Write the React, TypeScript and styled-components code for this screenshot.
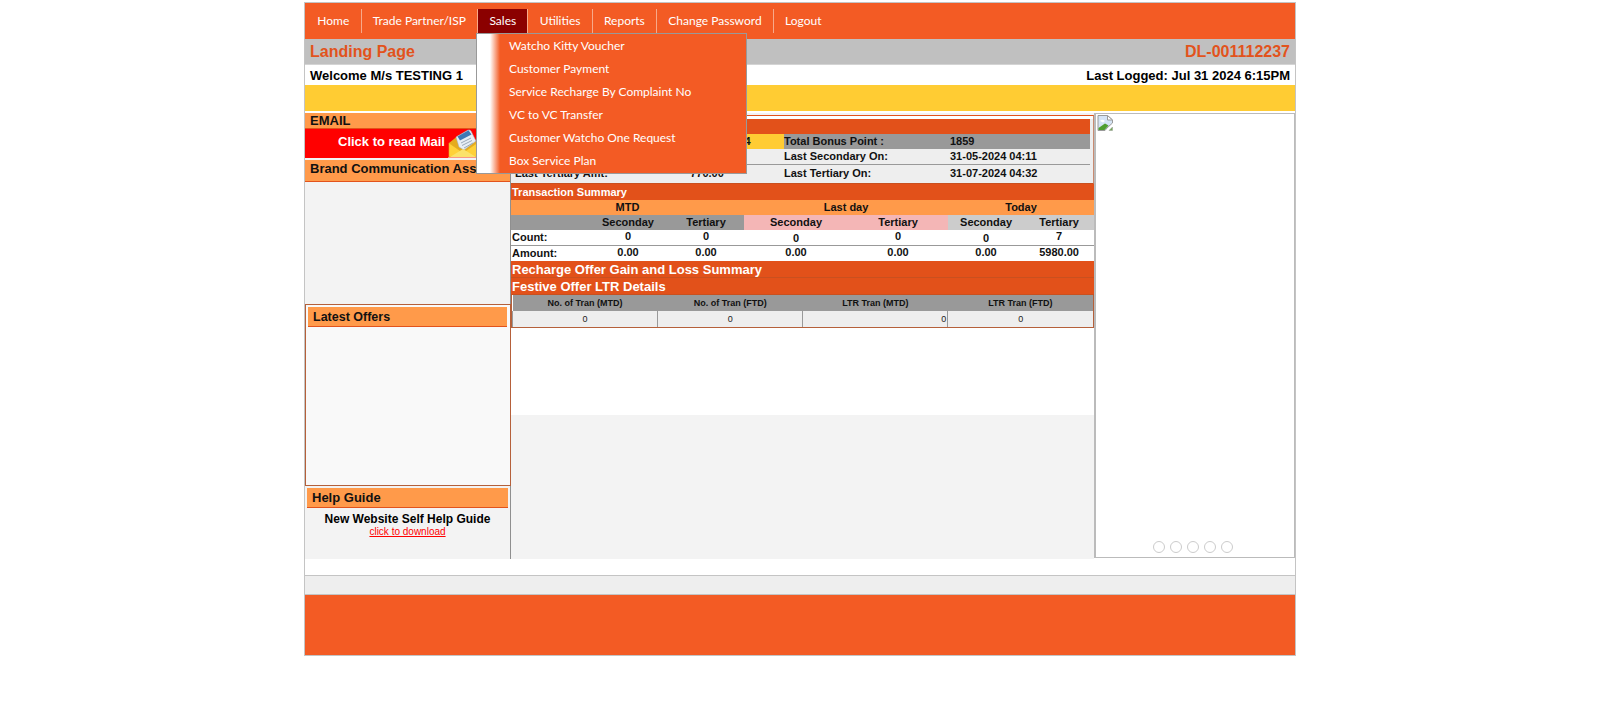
import React from 'react';
import styled, { createGlobalStyle } from 'styled-components';

const GlobalStyle = createGlobalStyle`
    html, body {
        margin: 0;
        padding: 0;
        background: #fff;
        font-family: "Liberation Sans", Arial, sans-serif;
    }
`;

const Page = styled.div`
    width: 990px;
    margin: 2px 0 0 304px;
    border: 1px solid #c4c4c4;
    position: relative;
`;

const NavBar = styled.nav`
    height: 36px;
    background: #f35b24;
    display: flex;
    align-items: center;
    padding: 0 0 0 1px;
`;

const NavItem = styled.div<{ $active?: boolean; $last?: boolean }>`
    box-sizing: border-box;
    height: 24px;
    padding: 0 11.25px 1px;
    display: flex;
    align-items: center;
    font-family: Lato, Roboto, sans-serif;
    font-size: 12px;
    color: #fff;
    background: ${(p) => (p.$active ? '#8b0000' : 'transparent')};
    border-right: 1px solid ${(p) => (p.$last ? 'transparent' : '#f7a98a')};
`;

const DropMenu = styled.div`
    position: absolute;
    left: 171px;
    top: 30px;
    width: 269px;
    height: 139px;
    border: 1px solid #999;
    background: linear-gradient(to right, #fff 0, #fff 13px, #f35b24 23px);
    z-index: 5;
`;

const DropItem = styled.div`
    height: 23px;
    line-height: 23px;
    padding-left: 32px;
    font-family: Lato, Roboto, sans-serif;
    font-size: 12px;
    color: #fff;
`;

const TitleBar = styled.div`
    height: 25px;
    background: #c0c0c0;
    border-bottom: 1px solid #d4d4d4;
    display: flex;
    justify-content: space-between;
    align-items: center;
    padding: 0 5px;
    font-size: 16px;
    font-weight: bold;
    color: #e2531c;
`;

const InfoRow = styled.div`
    height: 20px;
    display: flex;
    justify-content: space-between;
    align-items: center;
    padding: 0 5px;
    font-size: 13px;
    font-weight: bold;
    color: #000;
`;

const YellowBar = styled.div`
    height: 26px;
    background: #ffcc33;
`;

const Columns = styled.div`
    display: grid;
    grid-template-columns: 206px 583px 201px;
    margin-top: 2px;
    height: 446px;
`;

const LeftCol = styled.aside`
    background: #f3f3f3;
    border-right: 1px solid #8f8f8f;
    display: flex;
    flex-direction: column;
`;

const SectionHead = styled.div`
    height: 15px;
    line-height: 15px;
    padding-left: 5px;
    background: #ff9a4a;
    border-bottom: 1px solid #e2531c;
    font-size: 13px;
    font-weight: bold;
    color: #111;
    overflow: hidden;
    white-space: nowrap;
`;

const BrandHead = styled(SectionHead)`
    height: 21px;
    line-height: 17px;
`;

const MailLink = styled.div`
    height: 29px;
    margin-bottom: 2px;
    background: #ff0000;
    display: flex;
    align-items: center;
    padding-left: 33px;
    gap: 3px;
    color: #fff;
    font-size: 13px;
    font-weight: bold;
`;

const MailText = styled.span`
    margin-top: -4px;
`;

const BrandBody = styled.div`
    height: 122px;
`;

const OffersBox = styled.div`
    height: 178px;
    margin-right: -1px;
    border: 1px solid #b5603a;
    background: #f9f9f9;
    padding: 2px 3px 0 2px;
`;

const BoxHead = styled.div`
    height: 19px;
    line-height: 20px;
    padding-left: 5px;
    background: #ff9a4a;
    border-bottom: 1px solid #e2531c;
    font-size: 12.5px;
    font-weight: bold;
    color: #111;
`;

const HelpBox = styled.div`
    padding: 2px 2px 0;
    text-align: center;
`;

const HelpHead = styled(BoxHead)`
    text-align: left;
    font-size: 13px;
`;

const HelpTitle = styled.div`
    margin-top: 3px;
    font-size: 12px;
    line-height: 16px;
    font-weight: bold;
    color: #000;
`;

const HelpLink = styled.a`
    display: block;
    font-size: 10px;
    line-height: 10px;
    color: #ff0000;
    text-decoration: underline;
`;

const CenterCol = styled.main`
    background: #f3f3f3;
`;

const CenterTop = styled.div`
    background: #fff;
    height: 300px;
`;

const SummaryPanel = styled.div`
    background: linear-gradient(#fff 3px, #eee 3px);
    border-top: 1px solid #e2531c;
    border-right: 1px solid #c98a70;
    border-bottom: 1px solid #c9501f;
    margin-top: 2px;
    padding: 3px 3px 0 1px;
    height: 69px;
    box-sizing: border-box;
`;

const Grid = styled.table`
    border-collapse: collapse;
    table-layout: fixed;
    width: 100%;
    font-size: 11px;
    font-weight: bold;
    color: #111;
`;

const HeadBand = styled.tr`
    background: #e2511a;
    height: 15px;
`;

const Row = styled.tr<{ $line?: boolean; $tall?: boolean }>`
    height: ${(p) => (p.$tall ? '18px' : '15px')};
    border-bottom: ${(p) => (p.$line ? '1px solid #999' : 'none')};
`;

const Cell = styled.td<{ $bg?: string; $center?: boolean; $inset?: boolean }>`
    padding: 0 0 0 ${(p) => (p.$inset ? '3px' : '0')};
    line-height: 13px;
    white-space: nowrap;
    background: ${(p) => p.$bg || 'transparent'};
    text-align: ${(p) => (p.$center ? 'center' : 'left')};
`;

const Band = styled.div<{ $big?: boolean }>`
    background: #e2511a;
    color: #fff;
    font-weight: bold;
    height: ${(p) => (p.$big ? '16px' : '15px')};
    line-height: ${(p) => (p.$big ? '17px' : '16px')};
    font-size: ${(p) => (p.$big ? '13px' : '11px')};
    border-bottom: 1px solid ${(p) => (p.$big ? '#c9501f' : '#e2511a')};
    padding-left: 1px;
`;

const TxTable = styled(Grid)`
    text-align: center;
    background: #fff;

    tr + tr td:nth-child(3) {
        padding-right: 5px;
    }
`;

const TxRow = styled.tr<{ $line?: boolean }>`
    height: 15px;
    border-bottom: ${(p) => (p.$line ? '1px solid #999' : 'none')};
`;

const TxHead = styled.td<{ $bg: string }>`
    padding: 0;
    height: 15px;
    line-height: 15px;
    background: ${(p) => p.$bg};
    text-align: center;
`;

const TxCell = styled.td<{ $label?: boolean; $low?: boolean }>`
    padding: ${(p) => (p.$low ? '2px' : p.$label ? '1px' : '0')} 0 0 ${(p) => (p.$label ? '1px' : '0')};
    line-height: 13px;
    text-align: ${(p) => (p.$label ? 'left' : 'center')};
    vertical-align: top;
`;

const LtrWrap = styled.div`
    border: 1px solid #b5603a;
    border-top: none;
`;

const LtrTable = styled.table`
    border-collapse: collapse;
    table-layout: fixed;
    width: 100%;
    font-size: 9px;
    color: #222;
`;

const LtrHead = styled.th`
    height: 16px;
    padding: 0;
    background: #999;
    font-weight: bold;
    color: #111;
    text-align: center;
`;

const LtrCell = styled.td<{ $right?: boolean }>`
    height: 16px;
    padding: 0 ${(p) => (p.$right ? '1px' : '0')} 0 0;
    background: #eee;
    border-left: 1px solid #999;
    text-align: ${(p) => (p.$right ? 'right' : 'center')};
`;

const RightCol = styled.div`
    box-sizing: border-box;
    border: 1px solid #bbb;
    border-left-width: 2px;
    height: 445px;
    background: #fff;
    display: flex;
    flex-direction: column;
    justify-content: space-between;
    padding: 1px 0 4px 1px;
`;

const Dots = styled.div`
    display: flex;
    justify-content: center;
    gap: 5px;
    padding-right: 6px;
`;

const Dot = styled.span`
    box-sizing: border-box;
    width: 12px;
    height: 12px;
    border: 1px solid #ccc;
    border-radius: 50%;
    background: #fff;
`;

const Spacer = styled.div`
    height: 16px;
`;

const GreyStrip = styled.div`
    height: 18px;
    background: #eee;
    border-top: 1px solid #c4c4c4;
    border-bottom: 1px solid #c4c4c4;
`;

const Footer = styled.footer`
    height: 60px;
    background: #f35b24;
`;

const MailIcon = () => (
    <svg width="30" height="29" viewBox="0 0 30 29">
        <path d="M1 14 L11 6 H22 L29 14 V28 H1 Z" fill="#e5ab1e" />
        <path d="M8 8 L20 1 Q22 0.5 23 2 L28 12 L16 21 L11 18 Z" fill="#e8eef4" stroke="#9fb0c2" strokeWidth="0.5" />
        <path d="M9.5 7.5 L20.5 1.2 L23.5 5.5 L12 11.5 Z" fill="#3f79b5" />
        <path d="M13 14 L23 9 M14 16.5 L24 11.5 M16 19 L25 14" stroke="#9aa9b8" strokeWidth="1" />
        <path d="M1 14 L14 23 H16 L29 14 V28 H1 Z" fill="#ffd138" stroke="#e0ab22" strokeWidth="0.6" />
        <path d="M2 28 L15 20 L28 28 Z" fill="#fbe26a" />
        <path d="M0 29 H30" stroke="#fff" strokeWidth="1" />
    </svg>
);

const BrokenImage = () => (
    <svg width="16" height="16" viewBox="0 0 16 16">
        <path d="M1 0.5 H10.5 L15.5 5 V8 L10 13 L8 15.5 H1 Z" fill="#d5e4f5" stroke="#9a9a9a" strokeWidth="1" />
        <path d="M10.5 0.5 V5 H15.5 Z" fill="#fff" stroke="#9a9a9a" strokeWidth="1" />
        <path d="M3 6 Q5 3.5 8 6 L6 7.5 Z" fill="#fff" />
        <path d="M1.5 15 V13 L8 8.5 L11.5 10.5 L7.5 15 Z" fill="#4f9e2f" />
        <path d="M12 15.5 L15.5 12 V15.5 Z" fill="#6da84f" stroke="#9a9a9a" strokeWidth="0.5" />
    </svg>
);

const navItems = ['Home', 'Trade Partner/ISP', 'Sales', 'Utilities', 'Reports', 'Change Password', 'Logout'];
const salesItems = [
    'Watcho Kitty Voucher',
    'Customer Payment',
    'Service Recharge By Complaint No',
    'VC to VC Transfer',
    'Customer Watcho One Request',
    'Box Service Plan',
];

export default function App() {
    return (
        <>
            <GlobalStyle />
            <Page>
                <NavBar>
                    {navItems.map((item, i) => (
                        <NavItem key={item} $active={item === 'Sales'} $last={i === navItems.length - 1}>
                            {item}
                        </NavItem>
                    ))}
                </NavBar>
                <DropMenu>
                    {salesItems.map((item) => (
                        <DropItem key={item}>{item}</DropItem>
                    ))}
                </DropMenu>
                <TitleBar>
                    <span>Landing Page</span>
                    <span>DL-001112237</span>
                </TitleBar>
                <InfoRow>
                    <span>Welcome M/s TESTING 1</span>
                    <span>Last Logged: Jul 31 2024 6:15PM</span>
                </InfoRow>
                <YellowBar />
                <Columns>
                    <LeftCol>
                        <SectionHead>EMAIL</SectionHead>
                        <MailLink>
                            <MailText>Click to read Mail</MailText>
                            <MailIcon />
                        </MailLink>
                        <BrandHead>Brand Communication Assets</BrandHead>
                        <BrandBody />
                        <OffersBox>
                            <BoxHead>Latest Offers</BoxHead>
                        </OffersBox>
                        <HelpBox>
                            <HelpHead>Help Guide</HelpHead>
                            <HelpTitle>New Website Self Help Guide</HelpTitle>
                            <HelpLink>click to download</HelpLink>
                        </HelpBox>
                    </LeftCol>
                    <CenterCol>
                        <CenterTop>
                            <SummaryPanel>
                                <Grid>
                                    <colgroup>
                                        <col width="118" />
                                        <col width="154" />
                                        <col width="166" />
                                        <col width="140" />
                                    </colgroup>
                                    <tbody>
                                        <HeadBand>
                                            <Cell colSpan={4} />
                                        </HeadBand>
                                        <Row>
                                            <Cell />
                                            <Cell $bg="#ffcc33" $center>31-07-2024 04:34</Cell>
                                            <Cell $bg="#999">Total Bonus Point :</Cell>
                                            <Cell $bg="#999">1859</Cell>
                                        </Row>
                                        <Row $line>
                                            <Cell />
                                            <Cell />
                                            <Cell>Last Secondary On:</Cell>
                                            <Cell>31-05-2024 04:11</Cell>
                                        </Row>
                                        <Row $tall>
                                            <Cell $inset>Last Tertiary Amt:</Cell>
                                            <Cell $center>770.00</Cell>
                                            <Cell>Last Tertiary On:</Cell>
                                            <Cell>31-07-2024 04:32</Cell>
                                        </Row>
                                    </tbody>
                                </Grid>
                            </SummaryPanel>
                            <Band>Transaction Summary</Band>
                            <TxTable>
                                <colgroup>
                                    <col width="72" />
                                    <col width="90" />
                                    <col width="71" />
                                    <col width="104" />
                                    <col width="100" />
                                    <col width="76" />
                                    <col width="70" />
                                </colgroup>
                                <tbody>
                                    <tr>
                                        <TxHead $bg="#ff9a4a" colSpan={3}>MTD</TxHead>
                                        <TxHead $bg="#ff9a4a" colSpan={2}>Last day</TxHead>
                                        <TxHead $bg="#ff9a4a" colSpan={2}>Today</TxHead>
                                    </tr>
                                    <tr>
                                        <TxHead $bg="#999" />
                                        <TxHead $bg="#999">Seconday</TxHead>
                                        <TxHead $bg="#999">Tertiary</TxHead>
                                        <TxHead $bg="#f4b6b6">Seconday</TxHead>
                                        <TxHead $bg="#f4b6b6">Tertiary</TxHead>
                                        <TxHead $bg="#ccc">Seconday</TxHead>
                                        <TxHead $bg="#ccc">Tertiary</TxHead>
                                    </tr>
                                    <TxRow $line>
                                        <TxCell $label>Count:</TxCell>
                                        <TxCell>0</TxCell>
                                        <TxCell>0</TxCell>
                                        <TxCell $low>0</TxCell>
                                        <TxCell>0</TxCell>
                                        <TxCell $low>0</TxCell>
                                        <TxCell>7</TxCell>
                                    </TxRow>
                                    <TxRow>
                                        <TxCell $label>Amount:</TxCell>
                                        <TxCell>0.00</TxCell>
                                        <TxCell>0.00</TxCell>
                                        <TxCell>0.00</TxCell>
                                        <TxCell>0.00</TxCell>
                                        <TxCell>0.00</TxCell>
                                        <TxCell>5980.00</TxCell>
                                    </TxRow>
                                </tbody>
                            </TxTable>
                            <Band $big>Recharge Offer Gain and Loss Summary</Band>
                            <Band $big>Festive Offer LTR Details</Band>
                            <LtrWrap>
                                <LtrTable>
                                    <thead>
                                        <tr>
                                            <LtrHead>No. of Tran (MTD)</LtrHead>
                                            <LtrHead>No. of Tran (FTD)</LtrHead>
                                            <LtrHead>LTR Tran (MTD)</LtrHead>
                                            <LtrHead>LTR Tran (FTD)</LtrHead>
                                        </tr>
                                    </thead>
                                    <tbody>
                                        <tr>
                                            <LtrCell>0</LtrCell>
                                            <LtrCell>0</LtrCell>
                                            <LtrCell $right>0</LtrCell>
                                            <LtrCell>0</LtrCell>
                                        </tr>
                                    </tbody>
                                </LtrTable>
                            </LtrWrap>
                        </CenterTop>
                    </CenterCol>
                    <RightCol>
                        <BrokenImage />
                        <Dots>
                            {[0, 1, 2, 3, 4].map((d) => (
                                <Dot key={d} />
                            ))}
                        </Dots>
                    </RightCol>
                </Columns>
                <Spacer />
                <GreyStrip />
                <Footer />
            </Page>
        </>
    );
}
